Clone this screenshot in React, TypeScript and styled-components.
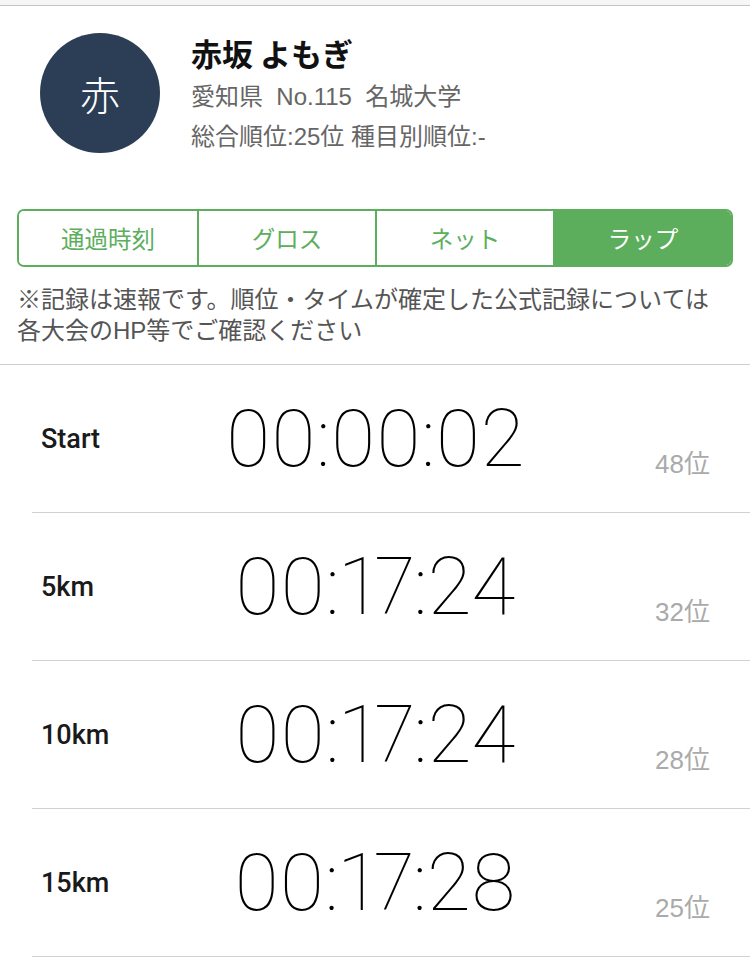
import styled, { createGlobalStyle } from "styled-components";

const GlobalStyle = createGlobalStyle`
  body {
    margin: 0;
    background: #fff;
    font-family: "Liberation Sans", "Noto Sans CJK JP", sans-serif;
  }
`;

const JP = `"Liberation Sans", "Noto Sans CJK JP", sans-serif`;

const Page = styled.div`
  width: 750px;
  background: #fff;
`;

const TopStrip = styled.div`
  height: 5px;
  background: #f6f6f6;
  border-bottom: 1px solid #c4c4c4;
`;

const Header = styled.div`
  display: flex;
  align-items: flex-start;
  gap: 31px;
  padding: 27px 0 0 40px;
  height: 150px;
  box-sizing: border-box;
`;

const Avatar = styled.div`
  width: 120px;
  height: 120px;
  border-radius: 50%;
  background: #2c3e55;
  color: #fff;
  display: flex;
  align-items: center;
  justify-content: center;
  font-family: "Noto Sans CJK JP", sans-serif;
  font-size: 40px;
  font-weight: 300;
  flex-shrink: 0;
`;

const Info = styled.div`
  display: flex;
  flex-direction: column;
`;

const Name = styled.div`
  font-family: "Noto Sans CJK JP", sans-serif;
  font-size: 31px;
  font-weight: 700;
  color: #111;
  line-height: 40px;
  margin-bottom: 4px;
`;

const SubLine = styled.div`
  font-family: ${JP};
  font-size: 24px;
  color: #666;
  line-height: 40px;
  white-space: pre;
`;

const Tabs = styled.div`
  display: grid;
  grid-template-columns: repeat(4, 1fr);
  margin: 53px 17px 0;
  height: 58px;
  border: 2px solid #5cae5c;
  border-radius: 7px;
  overflow: hidden;
  box-sizing: border-box;
`;

const Tab = styled.div<{ $active?: boolean }>`
  display: flex;
  align-items: center;
  justify-content: center;
  font-family: "Noto Sans CJK JP", sans-serif;
  font-size: 23.5px;
  color: ${(p) => (p.$active ? "#fff" : "#5cae5c")};
  background: ${(p) => (p.$active ? "#5cae5c" : "#fff")};
  & + & {
    border-left: 2px solid #5cae5c;
  }
`;

const Note = styled.div`
  padding: 17px 17px 18px;
  font-family: ${JP};
  font-size: 24px;
  line-height: 31px;
  color: #555;
  border-bottom: 1px solid #cfcfcf;
  white-space: nowrap;
`;

const Rows = styled.div`
  padding-left: 32px;
`;

const Row = styled.div`
  position: relative;
  height: 148px;
  display: flex;
  align-items: center;
  border-bottom: 1px solid #d2d2d2;
  box-sizing: border-box;
`;

const Label = styled.div`
  width: 120px;
  padding-left: 9px;
  font-family: Roboto, "Liberation Sans", sans-serif;
  font-weight: 500;
  font-size: 27px;
  color: #1a1a1a;
`;

const Time = styled.div`
  position: absolute;
  left: -32px;
  right: 0;
  text-align: center;
  font-family: Roboto, "Liberation Sans", sans-serif;
  font-weight: 100;
  font-size: 80px;
  color: #000;
  font-variant-numeric: proportional-nums;
`;

const Rank = styled.div`
  position: absolute;
  right: 40px;
  bottom: 32px;
  font-family: ${JP};
  font-size: 26px;
  color: #aaa;
`;

const laps = [
  { label: "Start", time: "00:00:02", rank: "48位" },
  { label: "5km", time: "00:17:24", rank: "32位" },
  { label: "10km", time: "00:17:24", rank: "28位" },
  { label: "15km", time: "00:17:28", rank: "25位" },
];

export default function App() {
  return (
    <Page>
      <GlobalStyle />
      <TopStrip />
      <Header>
        <Avatar>赤</Avatar>
        <Info>
          <Name>赤坂 よもぎ</Name>
          <SubLine>{"愛知県  No.115  名城大学"}</SubLine>
          <SubLine>総合順位:25位 種目別順位:-</SubLine>
        </Info>
      </Header>
      <Tabs>
        <Tab>通過時刻</Tab>
        <Tab>グロス</Tab>
        <Tab>ネット</Tab>
        <Tab $active>ラップ</Tab>
      </Tabs>
      <Note>
        ※記録は速報です。順位・タイムが確定した公式記録については
        <br />
        各大会のHP等でご確認ください
      </Note>
      <Rows>
        {laps.map((l) => (
          <Row key={l.label}>
            <Label>{l.label}</Label>
            <Time>{l.time}</Time>
            <Rank>{l.rank}</Rank>
          </Row>
        ))}
      </Rows>
    </Page>
  );
}
